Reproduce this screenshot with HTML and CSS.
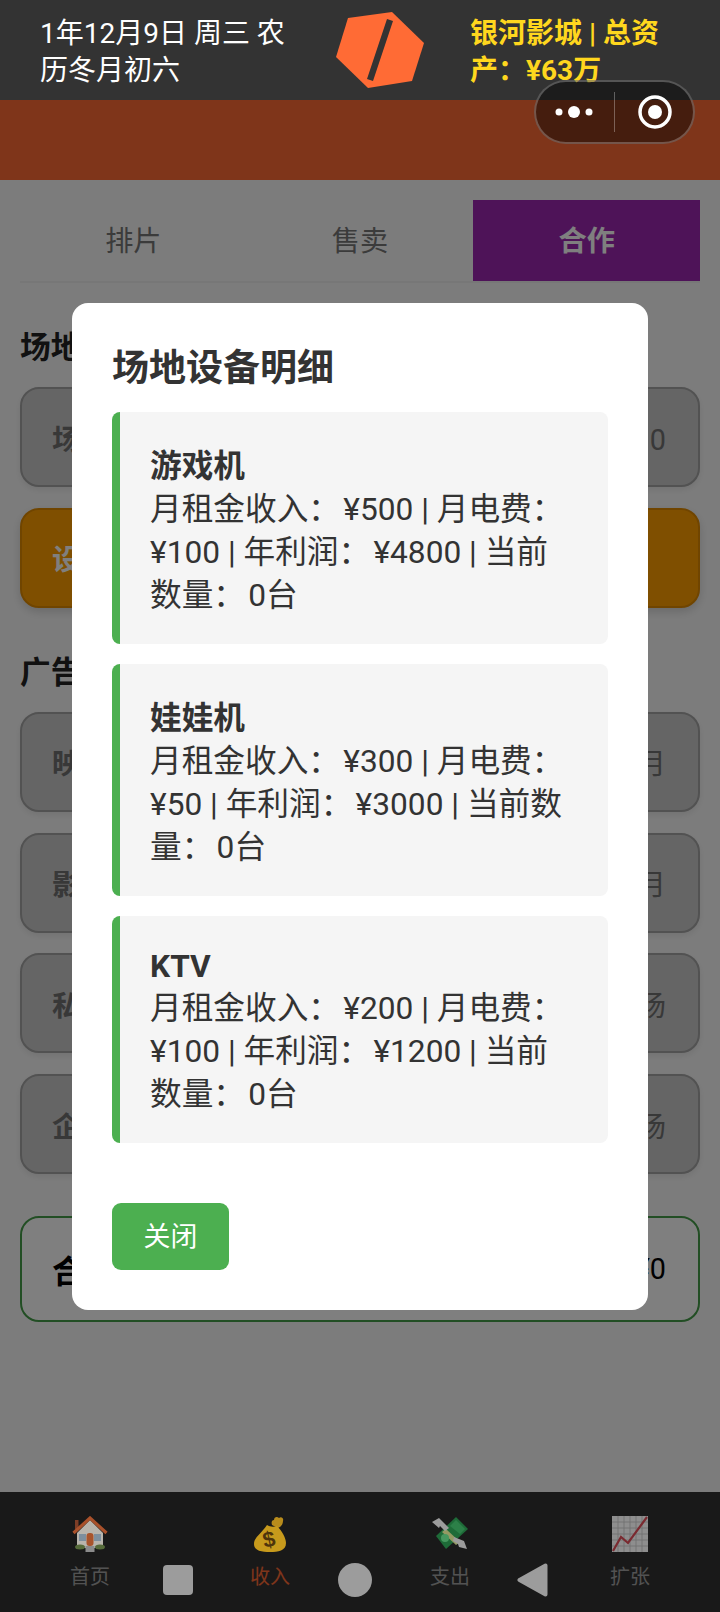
FILE: index.html
```html
<!DOCTYPE html>
<html lang="zh-CN">
<head>
<meta charset="utf-8">
<title>银河影城</title>
<link rel="stylesheet" href="styles.css">
</head>
<body>
<div class="screen">
  <header class="topbar">
    <div class="date">1年12月9日 周三 农历冬月初六</div>
    <svg class="logo" viewBox="0 0 88 76" aria-hidden="true">
      <polygon class="logo-hex" points="56,0 88,31 76,69 32,76 0,45 12,6"/>
      <polygon class="logo-bar" points="51,7 57,9 37,69 31,67"/>
    </svg>
    <div class="assets">银河影城 | 总资产：¥63万</div>
  </header>
  <div class="band"></div>

  <main class="content">
    <nav class="tabs">
      <div class="tab">排片</div>
      <div class="tab">售卖</div>
      <div class="tab tab-active">合作</div>
    </nav>

    <h2 class="heading">场地</h2>
    <div class="cards">
      <div class="card"><span class="card-name">场地</span><span class="card-val">已有：0</span></div>
      <div class="card card-orange"><span class="card-name">设备</span></div>
    </div>

    <h2 class="heading">广告</h2>
    <div class="cards">
      <div class="card"><span class="card-name">映前</span><span class="card-val">¥0/月</span></div>
      <div class="card"><span class="card-name">影厅</span><span class="card-val">¥0/月</span></div>
      <div class="card"><span class="card-name">私人</span><span class="card-val">¥0/场</span></div>
      <div class="card"><span class="card-name">企业</span><span class="card-val">¥0/场</span></div>
    </div>

    <div class="card card-total"><span class="total-name">合计</span><span class="total-val">¥0</span></div>
  </main>

  <footer class="bottomnav">
    <div class="navitem">
      <svg class="navicon" viewBox="0 0 36 36" aria-hidden="true">
        <rect x="3" y="4" width="3.500" height="9" fill="#7d3d26"/>
        <polygon points="5,17 18,4 31,17 31,32 5,32" fill="#b9b5ad"/>
        <rect x="7" y="18" width="7" height="7" fill="#7d8f9e"/>
        <rect x="22" y="18" width="7" height="7" fill="#7d8f9e"/>
        <path d="M1.500 17 18 2 34.500 17" fill="none" stroke="#a9512b" stroke-width="3.200"/>
        <rect x="14.500" y="17" width="7" height="13" rx="3" fill="#a8542c"/>
        <ellipse cx="8" cy="31" rx="5" ry="2.500" fill="#566b3a"/>
        <ellipse cx="28" cy="31" rx="5" ry="2.500" fill="#566b3a"/>
        <rect x="13.500" y="30" width="9" height="6" fill="#8b8b8b"/>
      </svg>
      <span class="navlabel">首页</span>
    </div>
    <div class="navitem navitem-active">
      <svg class="navicon" viewBox="0 0 36 36" aria-hidden="true">
        <path d="M20 9c-1-3 0-5 2-5 0-3 3-4 5-2 2-2 5 0 4 3 0 3-2 6-5 7z" fill="#b88c1c"/>
        <path d="M15 9c3 2 7 2 10 1 5 5 9 12 9 17 0 8-8 9-16 9S2 35 2 28C2 21 10 17 15 9z" fill="#c79a1c"/>
        <text class="bag-dollar" x="17" y="31" transform="rotate(-12 17 24)">$</text>
      </svg>
      <span class="navlabel">收入</span>
    </div>
    <div class="navitem">
      <svg class="navicon" viewBox="0 0 36 36" aria-hidden="true">
        <polygon points="24,1 36,13 14,33 4,20" fill="#1e6b38"/>
        <polygon points="24,4 33,13 28,18 18,10" fill="#2c8048"/>
        <polygon points="10,16 14,13 28,26 24,29" fill="#939a63"/>
        <circle cx="13" cy="22" r="4" fill="#46985f"/>
        <polygon points="0,6 7,2 17,12 13,15 8,10 7,12" fill="#9c9c9c"/>
        <polygon points="35,33 32,25 22,21 21,25 26,28 27,31" fill="#9c9c9c"/>
      </svg>
      <span class="navlabel">支出</span>
    </div>
    <div class="navitem">
      <svg class="navicon" viewBox="0 0 36 36" aria-hidden="true">
        <rect width="36" height="36" fill="#8e8e8e"/>
        <path class="chart-grid" d="M6 0v36M12 0v36M18 0v36M24 0v36M30 0v36M0 6h36M0 12h36M0 18h36M0 24h36M0 30h36"/>
        <path class="chart-line" d="M1 35 9 21l7 6L35 1"/>
      </svg>
      <span class="navlabel">扩张</span>
    </div>
  </footer>

  <div class="overlay">
    <section class="modal">
      <h3 class="modal-title">场地设备明细</h3>
      <div class="items">
        <div class="item">
          <strong class="item-name">游戏机</strong>
          月租金收入：&#8202;¥500 | 月电费：&#8202;¥100 | 年利润：&#8202;¥4800 | 当前数量：&#8202;0台
        </div>
        <div class="item">
          <strong class="item-name">娃娃机</strong>
          月租金收入：&#8202;¥300 | 月电费：&#8202;¥50 | 年利润：&#8202;¥3000 | 当前数量：&#8202;0台
        </div>
        <div class="item">
          <strong class="item-name item-name-latin">KTV</strong>
          月租金收入：&#8202;¥200 | 月电费：&#8202;¥100 | 年利润：&#8202;¥1200 | 当前数量：&#8202;0台
        </div>
      </div>
      <button class="close">关闭</button>
    </section>
  </div>

  <div class="capsule">
    <svg class="capsule-dots" viewBox="0 0 38 14" aria-hidden="true">
      <circle cx="4" cy="7" r="3.500"/><circle cx="19" cy="7" r="6"/><circle cx="34" cy="7" r="3.500"/>
    </svg>
    <span class="capsule-sep"></span>
    <svg class="capsule-target" viewBox="0 0 34 34" aria-hidden="true">
      <circle class="target-ring" cx="17" cy="17" r="15"/><circle cx="17" cy="17" r="7"/>
    </svg>
  </div>

  <div class="sysnav">
    <span class="sys-square"></span>
    <span class="sys-circle"></span>
    <svg class="sys-back" viewBox="0 0 31 34" aria-hidden="true">
      <path d="M28.500 2.500v29L2.500 17z"/>
    </svg>
  </div>
</div>
</body>
</html>
```

FILE: styles.css
```css
* { box-sizing: border-box; }
html, body { margin: 0; padding: 0; }
body { font-family: Roboto, "Noto Sans CJK SC", sans-serif; color: #333; background: #fff; }

.screen { position: relative; width: 720px; height: 1612px; overflow: hidden; display: flex; flex-direction: column; background: #f9f9f9; }

.topbar { position: relative; z-index: 3; flex: none; height: 100px; background: #333; padding: 0 40px; display: flex; align-items: center; justify-content: space-between; font-size: 28px; line-height: 37px; }
.date { width: 250px; margin-top: 3px; color: #fff; }
.assets { width: 210px; margin-top: 3px; color: #ffd71e; font-weight: 700; }
.logo { width: 88px; height: 76px; flex: none; margin-top: -1px; }
.logo-hex { fill: #ff6b35; }
.logo-bar { fill: #333; }

.band { flex: none; height: 80px; background: #ff6b35; }

.content { flex: 1; padding: 20px 20px 0; display: flex; flex-direction: column; }

.tabs { display: flex; border-bottom: 2px solid #eee; margin-bottom: 43px; }
.tab { flex: 1; height: 81px; padding-bottom: 5px; display: flex; align-items: center; justify-content: center; font-size: 28.2px; color: #777; }
.tab-active { background: #9c27b0; color: #fff; font-weight: 700; }

.heading { margin: 0 0 18px; font-size: 30.72px; line-height: 43px; font-weight: 700; color: #222; }

.cards { display: flex; flex-direction: column; gap: 20.8px; margin-bottom: 43px; }
.card { height: 100px; padding: 0 32px 0 30px; border: 2px solid #a4a4a4; border-radius: 19px; background: #cacaca; display: flex; align-items: center; justify-content: space-between; box-shadow: 0 3px 6px rgba(0,0,0,.08); font-size: 28.8px; color: #707070; }
.card-name { font-weight: 700; }
.card-orange { background: #ff9f00; border-color: #e08a00; color: #fff; box-shadow: 0 4px 10px rgba(0,0,0,.15); }
.card-total { height: 106px; margin-top: -1px; background: #fff; border-color: #449c48; box-shadow: none; color: #000; }
.total-name { font-weight: 700; font-size: 31.68px; }

.bottomnav { flex: none; height: 120px; background: #333; display: flex; }
.navitem { flex: 1; display: flex; flex-direction: column; align-items: center; padding-top: 24px; color: #a4a4a4; }
.navitem-active { color: #ff6b35; }
.navicon { position: relative; z-index: 3; width: 36px; height: 36px; display: block; }
.navlabel { margin-top: 10px; font-size: 20px; line-height: 30px; }
.bag-dollar { font-family: "Liberation Sans", sans-serif; font-weight: 700; font-size: 22px; text-anchor: middle; fill: #4e340c; }
.chart-grid { fill: none; stroke: #6f6f6f; stroke-width: .8; }
.chart-line { fill: none; stroke: #7a2a30; stroke-width: 2.200; }

.overlay { position: absolute; inset: 0; z-index: 2; background: rgba(0,0,0,.5); display: flex; align-items: center; justify-content: center; }
.modal { width: 576px; height: 1007px; padding: 40px; background: #fff; border-radius: 16px; }
.modal-title { margin: 0 0 17px; font-size: 37px; line-height: 52px; font-weight: 700; color: #333; }
.items { display: flex; flex-direction: column; gap: 20px; }
.item { padding: 33px 33px 27px 30px; border-left: 8px solid #4caf50; border-radius: 8px; background: #f5f5f5; font-size: 31.68px; line-height: 43px; color: #333; }
.item-name { display: block; font-weight: 700; }
.item-name-latin { line-height: 38px; margin: -1px 0 1px; }
.close { display: block; margin: 60px 0 0; width: 117px; height: 67px; padding: 0 0 3px; border: 0; border-radius: 9px; background: #4caf50; color: #fff; font: inherit; font-size: 26.88px; }

.capsule { position: absolute; z-index: 4; left: 534px; top: 80px; width: 161px; height: 64px; border: 2px solid rgba(255,255,255,.25); border-radius: 32px; background: rgba(0,0,0,.45); display: flex; align-items: center; }
.capsule-dots { width: 38px; height: 14px; margin-left: 19px; fill: #fff; }
.capsule-sep { width: 1px; height: 40px; margin-left: 21px; background: rgba(255,255,255,.3); }
.capsule-target { width: 34px; height: 34px; margin-left: 23px; fill: #fff; }
.target-ring { fill: none; stroke: #fff; stroke-width: 3.500; }

.sysnav { position: absolute; z-index: 4; left: 163px; top: 1563px; height: 34px; display: flex; align-items: center; gap: 145px; }
.sys-square { width: 30px; height: 30px; border-radius: 4px; background: #9c9c9c; }
.sys-circle { width: 34px; height: 34px; border-radius: 50%; background: #9c9c9c; }
.sys-back { width: 31px; height: 34px; fill: #9c9c9c; stroke: #9c9c9c; stroke-width: 4; stroke-linejoin: round; }
```
